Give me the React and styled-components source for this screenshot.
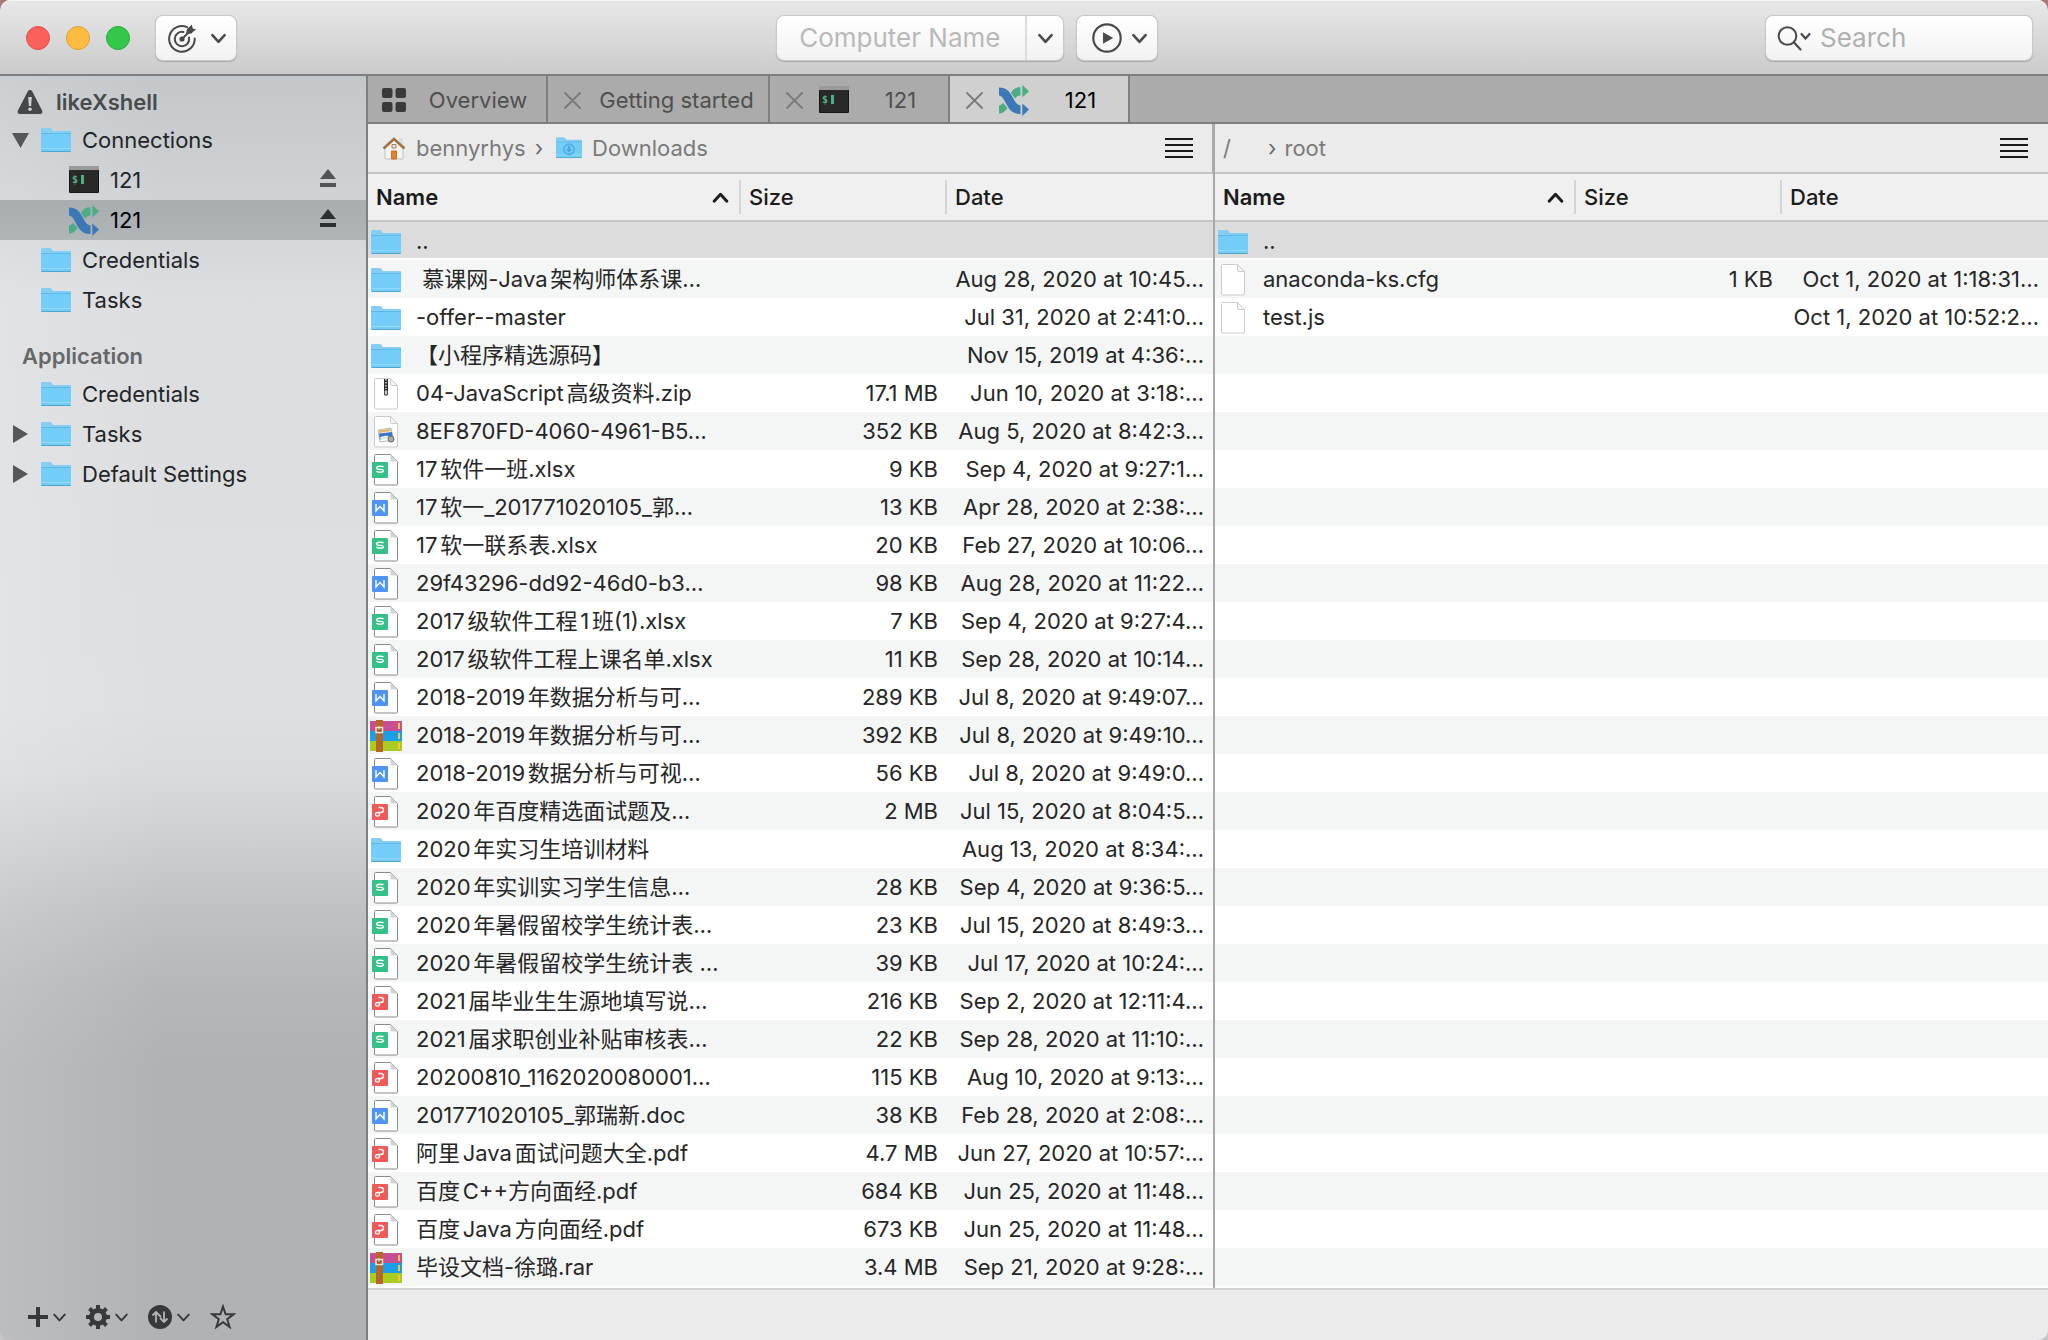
import { useState } from "react";
import styled, { createGlobalStyle } from "styled-components";

const GlobalStyle = createGlobalStyle`
  * {
    box-sizing: border-box;
  }

  body {
    margin: 0;
    background: linear-gradient(#a9767a 50%, #c6c6ca 50%);
    color: #262626;
    font-family: Inter, "Noto Sans CJK SC", sans-serif;
    font-size: 22px;
    line-height: 28px;
    text-autospace: normal;
  }

  button,
  input {
    margin: 0;
    padding: 0;
    border: 0;
    background: none;
    color: inherit;
    font: inherit;
  }

  svg {
    display: block;
    flex-shrink: 0;
  }
`;

const Window = styled.div`
  display: flex;
  flex-direction: column;
  min-height: 100vh;
  border-radius: 10px;
  overflow: hidden;
`;

const Toolbar = styled.header`
  display: flex;
  align-items: center;
  height: 76px;
  padding: 2px 16px 0 26px;
  background: linear-gradient(#e8e8e8, #cbcbcb);
  border-bottom: 2px solid #7f7f7f;
  box-shadow: inset 0 1px 0 #f4f4f4;
`;

const Lights = styled.div`
  display: flex;
  gap: 16px;
  margin-right: 26px;
`;

const Light = styled.button`
  width: 24px;
  height: 24px;
  border-radius: 50%;
  background: ${(props) => props.$color};
  border: 1px solid ${(props) => props.$edge};
`;

const Spacer = styled.div`
  flex: ${(props) => props.$grow} 1 0;
`;

const ToolButton = styled.button`
  display: flex;
  align-items: center;
  gap: ${(props) => (props.$tight ? "10px" : "14px")};
  width: 80px;
  height: 44px;
  padding-left: ${(props) => (props.$tight ? "15px" : "11px")};
  border-radius: 7px;
  background: linear-gradient(#fff, #f2f2f2);
  box-shadow: 0 0 0 1px #c9c9c9, 0 1px 1px 1px #a9a9a9;
  color: #4a4a4a;
`;

const ComputerBox = styled.div`
  display: flex;
  width: 286px;
  height: 44px;
  margin-right: 14px;
  border-radius: 7px;
  background: linear-gradient(#fff, #f2f2f2);
  box-shadow: 0 0 0 1px #c9c9c9, 0 1px 1px 1px #a9a9a9;
  color: #4a4a4a;

  input {
    flex: 1;
    min-width: 0;
    padding-left: 22px;
    font-size: 26px;
    outline: 0;
  }

  input::placeholder {
    color: #b9b9b9;
  }

  button {
    display: flex;
    align-items: center;
    justify-content: center;
    width: 38px;
    border-left: 2px solid #dcdcdc;
  }
`;

const SearchBox = styled.label`
  display: flex;
  align-items: center;
  width: 266px;
  height: 44px;
  padding-left: 11px;
  border-radius: 7px;
  background: linear-gradient(#fff, #f2f2f2);
  box-shadow: 0 0 0 1px #c9c9c9, 0 1px 1px 1px #a9a9a9;
  color: #4a4a4a;

  input {
    flex: 1;
    min-width: 0;
    padding-left: 7px;
    font-size: 26px;
    outline: 0;
  }

  input::placeholder {
    color: #b0b0b0;
  }
`;

const Body = styled.div`
  flex: 1;
  display: grid;
  grid-template-columns: 368px minmax(0, 1fr);
`;

const Sidebar = styled.aside`
  display: flex;
  flex-direction: column;
  border-right: 2px solid #7f7f7d;
  background: linear-gradient(
      90deg,
      rgba(255, 255, 255, 0.15),
      rgba(255, 255, 255, 0) 45%
    ),
    linear-gradient(
      #c3c7ca 0%,
      #ced2d5 9%,
      #dbdde0 17%,
      #dddee0 30%,
      #dedfe1 50%,
      #dadbde 55%,
      #cfd0d3 60%,
      #c0c1c3 66%,
      #b6b7b9 72%,
      #b1b2b4 78%,
      #b1b2b4 100%
    );
`;

const SectionTitle = styled.h2`
  display: flex;
  align-items: center;
  gap: 13px;
  height: ${(props) => (props.$first ? "44px" : "54px")};
  margin: 0;
  padding: ${(props) => (props.$first ? "8px 0 0 17px" : "18px 0 0 22px")};
  color: ${(props) => (props.$first ? "#484c4e" : "#666769")};
  font-size: 22px;
  font-weight: 600;
`;

const Tree = styled.ul`
  margin: 0;
  padding: 0;
  list-style: none;
`;

const TreeRow = styled.li`
  display: flex;
  align-items: center;
  height: 40px;
  padding: 0 30px 0 12px;
  background: ${(props) =>
    props.$selected ? "linear-gradient(#a8adb0, #b0b5b8)" : "none"};
  color: ${(props) => (props.$selected ? "#000" : "#222527")};
`;

const Disclosure = styled.button`
  display: flex;
  width: ${(props) => (props.$nested ? "57px" : "29px")};
  color: #55585a;
`;

const TreeLabel = styled.span`
  flex: 1;
  margin-left: 11px;
`;

const Eject = styled.button`
  color: ${(props) => (props.$selected ? "#2c3033" : "#505457")};
`;

const SidebarTools = styled.div`
  display: flex;
  align-items: center;
  gap: 20px;
  margin-top: auto;
  height: 46px;
  padding-left: 28px;
  color: #37393b;

  button {
    display: flex;
    align-items: center;
    gap: 5px;
  }
`;

const Main = styled.main`
  display: flex;
  flex-direction: column;
  min-width: 0;
`;

const TabBar = styled.nav`
  display: flex;
  height: 48px;
  background: #ababab;
  border-bottom: 2px solid #7f7f7f;
`;

const Tab = styled.div`
  display: flex;
  align-items: center;
  gap: 16px;
  width: ${(props) => (props.$wide ? "222px" : "180px")};
  padding: 2px 12px 0 ${(props) => (props.$overview ? "14px" : "16px")};
  border-right: 2px solid #7f7f7f;
  background: ${(props) => (props.$active ? "#d0d0d0" : "none")};
  color: ${(props) => (props.$active ? "#000" : "#4f4f4f")};
`;

const CloseButton = styled.button`
  color: #7a7a7a;
`;

const TabLabel = styled.button`
  flex: 1;
  text-align: center;
  white-space: nowrap;
`;

const Panes = styled.div`
  flex: 1;
  display: grid;
  grid-template-columns: minmax(0, 845fr) minmax(0, 835fr);
`;

const Pane = styled.section`
  display: flex;
  flex-direction: column;
  min-width: 0;

  & + & {
    border-left: 2px solid #a9a9a9;
  }
`;

const PathBar = styled.div`
  display: flex;
  align-items: center;
  height: 50px;
  padding: 0 ${(props) => (props.$root ? "20px 0 8px" : "19px 0 14px")};
  background: #ebebeb;
  border-bottom: 2px solid #c4c4c4;
  border-right: ${(props) => (props.$root ? 0 : "1px solid #a9a9a9")};
  color: #7a7a7a;

  a {
    color: inherit;
    text-decoration: none;
  }
`;

const Crumb = styled.a`
  display: flex;
  align-items: center;
  gap: 10px;
  min-width: ${(props) => (props.$wide ? "42px" : "0")};
`;

const Separator = styled.span`
  margin: ${(props) => (props.$root ? "0 8px 0 3px" : "0 13px 0 9px")};
  color: #6c6c6c;
`;

const ListButton = styled.button`
  margin-left: auto;
  color: #1a1a1a;
`;

const FileArea = styled.div`
  flex: 1;
  background: repeating-linear-gradient(
      #f4f5f5 0 38px,
      #fff 38px 76px
    )
    0 86px;
`;

const FileTable = styled.table`
  width: 100%;
  table-layout: fixed;
  border-collapse: separate;
  border-spacing: 0;
`;

const HeaderCell = styled.th`
  width: ${(props) => props.$width || "auto"};
  height: 48px;
  padding: 0;
  background: #f0f0f0;
  border-bottom: 2px solid #c4c4c4;
  color: #1c1c1c;
  text-align: left;
  font-weight: ${(props) => (props.$sorted ? 600 : 500)};
`;

const HeaderLabel = styled.div`
  display: flex;
  align-items: center;
  justify-content: space-between;
  height: 34px;
  padding: 0 10px 0 8px;
  border-right: 2px solid ${(props) => (props.$last ? "transparent" : "#d4d4d4")};
`;

const FileRow = styled.tr`
  height: 38px;
  background: ${(props) =>
    props.$parent ? "linear-gradient(#dcdcdc 36px, #fff 36px)" : "none"};
`;

const Cell = styled.td`
  padding: 0 9px 0 0;
  text-align: right;
  white-space: pre;
`;

const NameCell = styled.td`
  padding: 0;
`;

const FileName = styled.div`
  display: flex;
  align-items: center;
  gap: 12px;
  height: 38px;
  overflow: hidden;
  white-space: pre;
`;

const StatusBar = styled.footer`
  height: 52px;
  background: #ebebeb;
  border-top: 2px solid #d2d2d2;
`;

const Chevron = ({ size = 15, up = false, thin = false }) => (
  <svg width={size} height={size} viewBox="0 0 16 16" fill="none" stroke="currentColor">
    <path
      d={up ? "M2 11.5 8 5l6 6.5" : "M1.5 4.5 8 11.5l6.5-7"}
      strokeWidth={thin ? 2.4 : 2.8}
      strokeLinecap="round"
      strokeLinejoin="round"
    />
  </svg>
);

const TargetIcon = () => (
  <svg width="30" height="30" viewBox="0 0 30 30" fill="none" stroke="currentColor" strokeWidth="2">
    <path d="M20 4.2A12.8 12.8 0 1 0 27.7 15.5" strokeLinecap="round" />
    <path d="M16.5 9A7.2 7.2 0 1 0 22 14.5" strokeLinecap="round" />
    <path d="m15 16 8-8" />
    <circle cx="15" cy="16" r="2.6" fill="currentColor" stroke="none" />
    <path d="m19 10.5 1-4.5 5-4.5.6 4 3.4.8-5 4.5z" fill="currentColor" stroke="none" />
  </svg>
);

const PlayIcon = () => (
  <svg width="30" height="30" viewBox="0 0 30 30">
    <circle cx="15" cy="15" r="13.7" fill="none" stroke="currentColor" strokeWidth="2.2" />
    <path d="M11 9.2 21.2 15 11 20.8z" fill="currentColor" />
  </svg>
);

const SearchIcon = () => (
  <svg width="36" height="26" viewBox="0 0 36 26" fill="none" stroke="currentColor" strokeLinecap="round">
    <circle cx="10.5" cy="11" r="8.8" strokeWidth="2" />
    <path d="m17 17.5 6.5 7" strokeWidth="2.2" />
    <path d="m24.5 9 4 4.5 4-4.5" strokeWidth="2.2" />
  </svg>
);

const WarningIcon = () => (
  <svg width="26" height="26" viewBox="0 0 26 26">
    <path
      d="M13 1c1 0 1.800.5 2.300 1.500l9.800 19c.8 1.700 0 3.500-2 3.500H2.900c-2 0-2.800-1.800-2-3.500l9.800-19C11.200 1.500 12 1 13 1z"
      fill="#44484a"
    />
    <path d="M11.2 8h3.6l-.6 9h-2.400z" fill="#cbcfd1" />
    <circle cx="13" cy="20.3" r="1.8" fill="#cbcfd1" />
  </svg>
);

const TriangleIcon = ({ open }) => (
  <svg width="17" height="18" viewBox="0 0 17 18" fill="currentColor">
    <path d={open ? "M0 2h17L8.5 17z" : "M1 0l15 9-15 9z"} />
  </svg>
);

const EjectIcon = () => (
  <svg width="16" height="22" viewBox="0 0 16 22" fill="currentColor">
    <path d="M8 0l8 10H0zM0 14h16v4H0z" />
  </svg>
);

const FolderShape = () => (
  <g>
    <path
      d="M0 1.500C0 .6.500 0 1.500 0h7c1 0 1.500.3 2 1l1.500 2h17c.7 0 1 .4 1 1V23H0z"
      fill="#85cdf2"
    />
    <path d="M0 5.500h30v17c0 1-.4 1.500-1.400 1.500H1.400C.4 24 0 23.500 0 22.500z" fill="#74cdf8" />
    <path d="M0 5.500h30" stroke="#5fb9e6" />
    <path d="M.5 23.500h29" stroke="#52a5cc" />
    <path d="M.5 20.500h29" stroke="#93daff" />
  </g>
);

const FolderIcon = () => (
  <svg width="30" height="24" viewBox="0 0 30 24">
    <FolderShape />
  </svg>
);

const DownloadsIcon = () => (
  <svg width="26" height="22" viewBox="0 0 30 25">
    <FolderShape />
    <circle cx="15" cy="14" r="6" fill="none" stroke="#4aa8dc" strokeWidth="1.5" />
    <path d="M13.5 10h3v4h2.500L15 18l-4-4h2.500z" fill="#4aa8dc" />
  </svg>
);

const HomeIcon = () => (
  <svg width="24" height="24" viewBox="0 0 24 24">
    <path d="M17 2h4v8h-4z" fill="#dedede" />
    <path d="M3 12 12 4l9 8v11H3z" fill="#f4f4f4" stroke="#c2c2c2" />
    <path d="M9.500 15h5v8h-5z" fill="#e8821e" stroke="#b8651a" strokeWidth=".8" />
    <path d="M10 8.500h4v3.500h-4z" fill="#dfe5ee" stroke="#b57b45" />
    <path d="M1.500 12.500 12 3l10.500 9.500" fill="none" stroke="#a3733f" strokeWidth="2.600" />
  </svg>
);

const TerminalIcon = () => (
  <svg width="30" height="28" viewBox="0 0 30 28">
    <rect y="1" width="30" height="26" rx="1" fill="#161616" />
    <rect x="1" y="4" width="28" height="22" fill="#292929" />
    <rect y="0" width="30" height="4" fill="#9b9b9b" />
    <text x="3" y="17" fill="#4caf86" fontFamily="DejaVu Sans Mono, monospace" fontSize="10" fontWeight="700">
      $
    </text>
    <rect x="12" y="9" width="3" height="9" fill="#4caf86" />
  </svg>
);

const TransferIcon = () => (
  <svg width="30" height="31" viewBox="0 0 30 31">
    <path d="M12 8C14 4 17 2 21.500 2v8.500c-2.500 0-4 1-5.500 3z" fill="#4cad84" />
    <path d="M23.300 0 30 6.300l-6.700 6.200z" fill="#4cad84" />
    <path d="M0 20.500c1.800-.3 3-1.300 4-2.800L8.500 23c-2.200 3.500-5 5.500-8.500 5.500z" fill="#4cad84" />
    <path
      d="M0 2.500c7.500 0 10.500 4 13.500 9.500 2.500 4.500 4 8 8 8.500V29C13 29 10 24 7 18.500 4.500 13.500 3 11 0 10.500z"
      fill="#3b78b5"
    />
    <path d="m23.300 18.500 6.700 6-6.700 6.500z" fill="#3b78b5" />
  </svg>
);

const GridIcon = () => (
  <svg width="24" height="24" viewBox="0 0 24 24" fill="#3a3a3a">
    <rect width="10.5" height="10" rx="2" />
    <rect x="13.5" width="10.5" height="10" rx="2" />
    <rect y="14" width="10.5" height="10" rx="2" />
    <rect x="13.5" y="14" width="10.5" height="10" rx="2" />
  </svg>
);

const CloseIcon = () => (
  <svg width="17" height="17" viewBox="0 0 17 17" stroke="currentColor" strokeWidth="1.8" strokeLinecap="round">
    <path d="m1 1 15 15M16 1 1 16" />
  </svg>
);

const ListIcon = () => (
  <svg width="28" height="20" viewBox="0 0 28 20" fill="currentColor">
    <path d="M0 0h28v2H0zM0 6h28v2H0zM0 12h28v2H0zM0 18h28v2H0z" />
  </svg>
);

const PlusIcon = () => (
  <svg width="20" height="20" viewBox="0 0 20 20" fill="currentColor">
    <path d="M8 0h4v8h8v4h-8v8H8v-8H0V8h8z" />
  </svg>
);

const GearIcon = () => (
  <svg width="24" height="24" viewBox="0 0 24 24">
    <circle cx="12" cy="12" r="6.5" fill="none" stroke="currentColor" strokeWidth="5" />
    {[0, 45, 90, 135, 180, 225, 270, 315].map((angle) => (
      <rect
        key={angle}
        x="10"
        y="0"
        width="4"
        height="5"
        fill="currentColor"
        transform={`rotate(${angle} 12 12)`}
      />
    ))}
  </svg>
);

const SyncIcon = () => (
  <svg width="24" height="24" viewBox="0 0 24 24">
    <circle cx="12" cy="12" r="12" fill="currentColor" />
    <path
      d="M8 17.500V7M4.500 10.500 8 7l5 5M16 6.500V17M19.500 13.500 16 17l-4-4"
      fill="none"
      stroke="#b4b5b7"
      strokeWidth="1.8"
    />
  </svg>
);

const StarIcon = () => (
  <svg width="26" height="26" viewBox="0 0 26 26">
    <path
      d="m13 2.500 2.600 7.700 8 .1-6.400 4.900 2.400 7.800-6.600-4.700L6.400 23l2.400-7.800-6.400-4.900 8-.1z"
      fill="none"
      stroke="currentColor"
      strokeWidth="2"
    />
  </svg>
);

const badges = {
  sheet: {
    color: "#35c088",
    mark: "M15.500 17c-1-1-7-1.300-7 .9 0 2.300 7 .6 7 2.900 0 2-6 1.700-7.200.5",
  },
  word: {
    color: "#4f94f2",
    mark: "M8 16v7l4-4.500 4 4.500v-7",
  },
  pdf: {
    color: "#ee5a5a",
    mark: "M10.500 15.500h2.500c3.500 0 3 5 0 5h-3.500c-3 0-2.500 4 .3 3.600 1.800-.3 1.900-2 1.200-3.300",
  },
};

// Every file icon shares the same 36x38 canvas so the names line up.
const FileIcon = ({ kind }) => {
  const badge = badges[kind];

  if (kind === "folder") {
    return (
      <svg width="36" height="38" viewBox="0 0 36 38">
        <g transform="translate(3 8)">
          <FolderShape />
        </g>
      </svg>
    );
  }

  if (kind === "rar") {
    return (
      <svg width="36" height="38" viewBox="0 0 36 38">
        <path d="M2 5h32v10H2z" fill="#c64f93" />
        <path d="M2 15h32v10H2z" fill="#1b9fe8" />
        <path d="M2 25h32v10H2z" fill="#a9cb22" />
        <path d="M31 7v6M31 17v6M31 27v6" stroke="#f2c83c" strokeWidth="2" />
        <path d="M8 4h7v32H8z" fill="#b5672a" />
        <path d="M8 11.500h6.500v5H8z" fill="#a3501a" stroke="#f3e2cc" strokeWidth="1.5" />
        <path d="M11 10v4" stroke="#f3e2cc" />
      </svg>
    );
  }

  return (
    <svg width="36" height="38" viewBox="0 0 36 38">
      <path
        d="M7.500 4.500h15l7 7v22.500c0 .6-.4 1-1 1h-21c-.6 0-1-.4-1-1V5.500c0-.6.400-1 1-1z"
        fill="#fff"
        stroke={badge ? "#8a8a8a" : "#cbcbcb"}
      />
      <path
        d="M22.500 4.500v6c0 .6.400 1 1 1h6z"
        fill={badge ? "#d5d5d5" : "#f4f4f4"}
        stroke={badge ? "none" : "#cbcbcb"}
      />
      {badge && (
        <>
          <rect x="4" y="12" width="16" height="16" rx="1" fill={badge.color} />
          <path d={badge.mark} fill="none" stroke="#fff" strokeWidth="1.4" />
        </>
      )}
      {kind === "zip" && (
        <>
          <path d="M18 5v12" stroke="#2e2e2e" strokeWidth="4" />
          <path d="M18 5v10" stroke="#d8d8d8" strokeWidth="1.5" strokeDasharray="1.5 1.5" />
          <path d="M16.700 16h2.600v5h-2.600z" fill="#eee" stroke="#2e2e2e" />
        </>
      )}
      {kind === "image" && (
        <>
          <path d="m10 18 13-2 2 12-13 2z" fill="#fff" stroke="#bbb" />
          <path d="m10.500 18.500 12-1.700.4 2.500-12 1.700z" fill="#e0b872" />
          <path d="m11 21.500 13-1.500.8 5-13 2.500z" fill="#3c73c4" />
          <path d="m12 25 6-1.500 5 1.500-10 3z" fill="#dce8f2" />
          <circle cx="23" cy="27" r="3" fill="#aaa" stroke="#666" />
        </>
      )}
    </svg>
  );
};

const connections = [
  { label: "Connections", icon: FolderIcon, disclosure: "open" },
  { label: "121", icon: TerminalIcon, nested: true },
  { label: "121", icon: TransferIcon, nested: true, selected: true },
  { label: "Credentials", icon: FolderIcon },
  { label: "Tasks", icon: FolderIcon },
];

const application = [
  { label: "Credentials", icon: FolderIcon },
  { label: "Tasks", icon: FolderIcon, disclosure: "closed" },
  { label: "Default Settings", icon: FolderIcon, disclosure: "closed" },
];

const localFiles = [
  ["folder", " 慕课网-Java架构师体系课…", "", "Aug 28, 2020 at 10:45…"],
  ["folder", "-offer--master", "", "Jul 31, 2020 at 2:41:0…"],
  ["folder", "【小程序精选源码】", "", "Nov 15, 2019 at 4:36:…"],
  ["zip", "04-JavaScript高级资料.zip", "17.1 MB", "Jun 10, 2020 at 3:18:…"],
  ["image", "8EF870FD-4060-4961-B5…", "352 KB", "Aug 5, 2020 at 8:42:3…"],
  ["sheet", "17软件一班.xlsx", "9 KB", "Sep 4, 2020 at 9:27:1…"],
  ["word", "17软一_201771020105_郭…", "13 KB", "Apr 28, 2020 at 2:38:…"],
  ["sheet", "17软一联系表.xlsx", "20 KB", "Feb 27, 2020 at 10:06…"],
  ["word", "29f43296-dd92-46d0-b3…", "98 KB", "Aug 28, 2020 at 11:22…"],
  ["sheet", "2017级软件工程1班(1).xlsx", "7 KB", "Sep 4, 2020 at 9:27:4…"],
  ["sheet", "2017级软件工程上课名单.xlsx", "11 KB", "Sep 28, 2020 at 10:14…"],
  ["word", "2018-2019年数据分析与可…", "289 KB", "Jul 8, 2020 at 9:49:07…"],
  ["rar", "2018-2019年数据分析与可…", "392 KB", "Jul 8, 2020 at 9:49:10…"],
  ["word", "2018-2019数据分析与可视…", "56 KB", "Jul 8, 2020 at 9:49:0…"],
  ["pdf", "2020年百度精选面试题及…", "2 MB", "Jul 15, 2020 at 8:04:5…"],
  ["folder", "2020年实习生培训材料", "", "Aug 13, 2020 at 8:34:…"],
  ["sheet", "2020年实训实习学生信息…", "28 KB", "Sep 4, 2020 at 9:36:5…"],
  ["sheet", "2020年暑假留校学生统计表…", "23 KB", "Jul 15, 2020 at 8:49:3…"],
  ["sheet", "2020年暑假留校学生统计表 …", "39 KB", "Jul 17, 2020 at 10:24:…"],
  ["pdf", "2021届毕业生生源地填写说…", "216 KB", "Sep 2, 2020 at 12:11:4…"],
  ["sheet", "2021届求职创业补贴审核表…", "22 KB", "Sep 28, 2020 at 11:10:…"],
  ["pdf", "20200810_1162020080001…", "115 KB", "Aug 10, 2020 at 9:13:…"],
  ["word", "201771020105_郭瑞新.doc", "38 KB", "Feb 28, 2020 at 2:08:…"],
  ["pdf", "阿里Java面试问题大全.pdf", "4.7 MB", "Jun 27, 2020 at 10:57:…"],
  ["pdf", "百度C++方向面经.pdf", "684 KB", "Jun 25, 2020 at 11:48…"],
  ["pdf", "百度Java方向面经.pdf", "673 KB", "Jun 25, 2020 at 11:48…"],
  ["rar", "毕设文档-徐璐.rar", "3.4 MB", "Sep 21, 2020 at 9:28:…"],
];

const remoteFiles = [
  ["file", "anaconda-ks.cfg", "1 KB", "Oct 1, 2020 at 1:18:31…"],
  ["file", "test.js", "", "Oct 1, 2020 at 10:52:2…"],
];

function TreeItems({ items }) {
  return (
    <Tree>
      {items.map(({ label, icon: Icon, disclosure, nested, selected }, index) => (
        <TreeRow key={index} $selected={selected}>
          {disclosure ? (
            <Disclosure aria-label={`Toggle ${label}`}>
              <TriangleIcon open={disclosure === "open"} />
            </Disclosure>
          ) : (
            <Disclosure as="span" $nested={nested} />
          )}
          <Icon />
          <TreeLabel>{label}</TreeLabel>
          {nested && (
            <Eject $selected={selected} aria-label="Disconnect">
              <EjectIcon />
            </Eject>
          )}
        </TreeRow>
      ))}
    </Tree>
  );
}

function FileList({ files }) {
  return (
    <FileArea>
      <FileTable>
        <thead>
          <tr>
            <HeaderCell $sorted>
              <HeaderLabel>
                Name
                <Chevron up size={17} />
              </HeaderLabel>
            </HeaderCell>
            <HeaderCell $width="206px">
              <HeaderLabel>Size</HeaderLabel>
            </HeaderCell>
            <HeaderCell $width="266px">
              <HeaderLabel $last>Date</HeaderLabel>
            </HeaderCell>
          </tr>
        </thead>
        <tbody>
          <FileRow $parent>
            <NameCell colSpan={3}>
              <FileName>
                <FileIcon kind="folder" />
                ..
              </FileName>
            </NameCell>
          </FileRow>
          {files.map(([kind, name, size, date], index) => (
            <FileRow key={index}>
              <NameCell>
                <FileName>
                  <FileIcon kind={kind} />
                  <span>{name}</span>
                </FileName>
              </NameCell>
              <Cell>{size}</Cell>
              <Cell>{date}</Cell>
            </FileRow>
          ))}
        </tbody>
      </FileTable>
    </FileArea>
  );
}

export default function App() {
  const [computer, setComputer] = useState("");
  const [search, setSearch] = useState("");

  return (
    <>
      <GlobalStyle />
      <Window>
        <Toolbar>
          <Lights>
            <Light aria-label="Close" $color="#fc605b" $edge="#e2504b" />
            <Light aria-label="Minimize" $color="#fdbc40" $edge="#dfa032" />
            <Light aria-label="Zoom" $color="#34c84a" $edge="#28aa38" />
          </Lights>
          <ToolButton aria-label="Connect">
            <TargetIcon />
            <Chevron />
          </ToolButton>
          <Spacer $grow={8} />
          <ComputerBox>
            <input
              aria-label="Computer Name"
              placeholder="Computer Name"
              value={computer}
              onChange={(event) => setComputer(event.target.value)}
            />
            <button aria-label="Recent computers">
              <Chevron />
            </button>
          </ComputerBox>
          <ToolButton $tight aria-label="Run">
            <PlayIcon />
            <Chevron />
          </ToolButton>
          <Spacer $grow={9} />
          <SearchBox>
            <SearchIcon />
            <input
              aria-label="Search"
              placeholder="Search"
              value={search}
              onChange={(event) => setSearch(event.target.value)}
            />
          </SearchBox>
        </Toolbar>

        <Body>
          <Sidebar>
            <SectionTitle $first>
              <WarningIcon />
              likeXshell
            </SectionTitle>
            <TreeItems items={connections} />
            <SectionTitle>Application</SectionTitle>
            <TreeItems items={application} />
            <SidebarTools>
              <button aria-label="Add">
                <PlusIcon />
                <Chevron size={13} thin />
              </button>
              <button aria-label="Settings">
                <GearIcon />
                <Chevron size={13} thin />
              </button>
              <button aria-label="Sync">
                <SyncIcon />
                <Chevron size={13} thin />
              </button>
              <button aria-label="Favorites">
                <StarIcon />
              </button>
            </SidebarTools>
          </Sidebar>

          <Main>
            <TabBar>
              <Tab $overview>
                <GridIcon />
                <TabLabel>Overview</TabLabel>
              </Tab>
              <Tab $wide>
                <CloseButton aria-label="Close tab">
                  <CloseIcon />
                </CloseButton>
                <TabLabel>Getting started</TabLabel>
              </Tab>
              <Tab>
                <CloseButton aria-label="Close tab">
                  <CloseIcon />
                </CloseButton>
                <TerminalIcon />
                <TabLabel>121</TabLabel>
              </Tab>
              <Tab $active>
                <CloseButton aria-label="Close tab">
                  <CloseIcon />
                </CloseButton>
                <TransferIcon />
                <TabLabel>121</TabLabel>
              </Tab>
            </TabBar>

            <Panes>
              <Pane>
                <PathBar>
                  <Crumb href="#bennyrhys">
                    <HomeIcon />
                    bennyrhys
                  </Crumb>
                  <Separator>›</Separator>
                  <Crumb href="#downloads">
                    <DownloadsIcon />
                    Downloads
                  </Crumb>
                  <ListButton aria-label="View options">
                    <ListIcon />
                  </ListButton>
                </PathBar>
                <FileList files={localFiles} />
              </Pane>
              <Pane>
                <PathBar $root>
                  <Crumb $wide href="#top">
                    /
                  </Crumb>
                  <Separator $root>›</Separator>
                  <Crumb href="#root">root</Crumb>
                  <ListButton aria-label="View options">
                    <ListIcon />
                  </ListButton>
                </PathBar>
                <FileList files={remoteFiles} />
              </Pane>
            </Panes>
            <StatusBar />
          </Main>
        </Body>
      </Window>
    </>
  );
}
